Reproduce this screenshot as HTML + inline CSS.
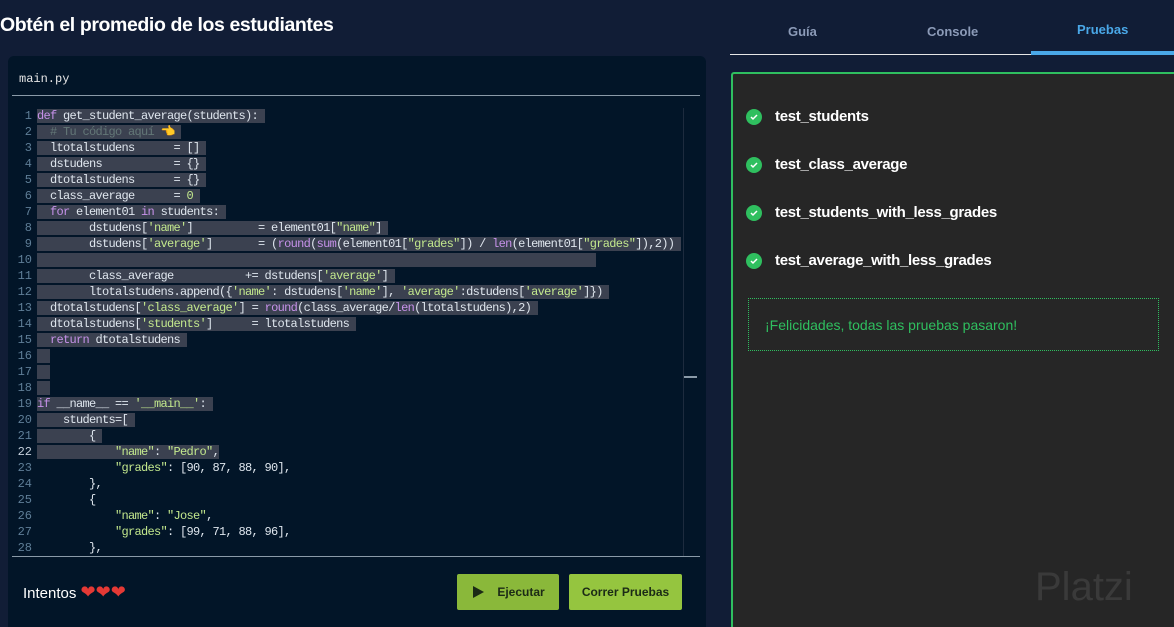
<!DOCTYPE html>
<html><head><meta charset="utf-8"><style>
*{margin:0;padding:0;box-sizing:border-box}
body{width:1174px;height:627px;overflow:hidden;background:#111d36;font-family:"Liberation Sans",sans-serif;position:relative}
.title{position:absolute;left:0;top:14px;color:#fff;font-weight:bold;font-size:19.5px;letter-spacing:-0.4px}
.ed{position:absolute;left:8px;top:56px;width:698px;height:571px;background:#021528;border-radius:6px 6px 0 0}
.fname{position:absolute;left:19px;top:72px;color:#e6e6e6;font:12px "Liberation Mono",monospace}
.hr{position:absolute;left:12px;width:688px;height:1px;background:#8a9aa8}
.code{position:absolute;left:8px;top:108px;width:675px;font:12px/16px "Liberation Mono",monospace;letter-spacing:-0.7px;color:#dfe6ee}
.ln{display:inline-block;width:24px;text-align:right;color:#5f7e97;margin-right:5px;letter-spacing:0}
.l{height:16px;white-space:pre}
.s{background:#3b4150}
.k{color:#c792ea}.g{color:#c3e88d}.c{color:#637777}
.sb{position:absolute;left:683px;top:108px;width:14px;height:448px;border-left:1px solid #1d2b3e}
.foot{position:absolute;left:23px;top:582px;color:#fff;font-size:15px}
.btn{position:absolute;top:574px;height:36px;border-radius:2px;color:#1b2a16;font-weight:bold;font-size:12px;display:flex;align-items:center;justify-content:center}
.tab{position:absolute;top:24px;font-weight:bold;font-size:13px;color:#8c9bb8}
.panel{position:absolute;left:731px;top:72px;width:443px;height:555px;background:#262626;border:2px solid #2fbf5f;border-right:none;border-bottom:none;border-radius:3px 0 0 0}
.t{position:absolute;left:746px;color:#fff;font-weight:bold;font-size:15px;display:flex;align-items:center;letter-spacing:-0.3px}
.ck{width:16px;height:16px;border-radius:50%;background:#2fbf5f;margin-right:13px;display:flex;align-items:center;justify-content:center}
.msg{position:absolute;left:748px;top:298px;width:411px;height:53px;border:1px dotted #2fbf5f;color:#2fbf5f;font-size:14px;padding:18px 0 0 16px}
</style></head><body>
<div class="title">Obtén el promedio de los estudiantes</div>
<div class="ed"></div>
<div class="fname">main.py</div>
<div class="hr" style="top:95px"></div>
<div class="hr" style="top:556px"></div>
<div class="sb"><div style="position:absolute;left:0;top:268px;width:13px;height:2px;background:#8a9aa8"></div></div>
<div class="code">
<div class="l"><span class="ln">1</span><span class="s"><span class="k">def</span> get_student_average(students): </span></div>
<div class="l"><span class="ln">2</span><span class="s">  <span class="c"># Tu código aquí</span> 👈 </span></div>
<div class="l"><span class="ln">3</span><span class="s">  ltotalstudens      = [] </span></div>
<div class="l"><span class="ln">4</span><span class="s">  dstudens           = {} </span></div>
<div class="l"><span class="ln">5</span><span class="s">  dtotalstudens      = {} </span></div>
<div class="l"><span class="ln">6</span><span class="s">  class_average      = <span class="g">0</span> </span></div>
<div class="l"><span class="ln">7</span><span class="s">  <span class="k">for</span> element01 <span class="k">in</span> students: </span></div>
<div class="l"><span class="ln">8</span><span class="s">        dstudens[<span class="g">'name'</span>]          = element01[<span class="g">"name"</span>] </span></div>
<div class="l"><span class="ln">9</span><span class="s">        dstudens[<span class="g">'average'</span>]       = (<span class="k">round</span>(<span class="k">sum</span>(element01[<span class="g">"grades"</span>]) / <span class="k">len</span>(element01[<span class="g">"grades"</span>]),2)) </span></div>
<div class="l"><span class="ln">10</span><span class="s">                                                                                      </span></div>
<div class="l"><span class="ln">11</span><span class="s">        class_average           += dstudens[<span class="g">'average'</span>] </span></div>
<div class="l"><span class="ln">12</span><span class="s">        ltotalstudens.append({<span class="g">'name'</span>: dstudens[<span class="g">'name'</span>], <span class="g">'average'</span>:dstudens[<span class="g">'average'</span>]}) </span></div>
<div class="l"><span class="ln">13</span><span class="s">  dtotalstudens[<span class="g">'class_average'</span>] = <span class="k">round</span>(class_average/<span class="k">len</span>(ltotalstudens),2) </span></div>
<div class="l"><span class="ln">14</span><span class="s">  dtotalstudens[<span class="g">'students'</span>]      = ltotalstudens </span></div>
<div class="l"><span class="ln">15</span><span class="s">  <span class="k">return</span> dtotalstudens </span></div>
<div class="l"><span class="ln">16</span><span class="s">  </span></div>
<div class="l"><span class="ln">17</span><span class="s">  </span></div>
<div class="l"><span class="ln">18</span><span class="s">  </span></div>
<div class="l"><span class="ln">19</span><span class="s"><span class="k">if</span> __name__ == <span class="g">'__main__'</span>: </span></div>
<div class="l"><span class="ln">20</span><span class="s">    students=[ </span></div>
<div class="l"><span class="ln">21</span><span class="s">        { </span></div>
<div class="l"><span class="ln" style="color:#c5d0dc">22</span><span class="s">            <span class="g">"name"</span>: <span class="g">"Pedro"</span>,</span></div>
<div class="l"><span class="ln">23</span>            <span class="g">"grades"</span>: [90, 87, 88, 90],</div>
<div class="l"><span class="ln">24</span>        },</div>
<div class="l"><span class="ln">25</span>        {</div>
<div class="l"><span class="ln">26</span>            <span class="g">"name"</span>: <span class="g">"Jose"</span>,</div>
<div class="l"><span class="ln">27</span>            <span class="g">"grades"</span>: [99, 71, 88, 96],</div>
<div class="l"><span class="ln">28</span>        },</div>
</div>
<div class="foot">Intentos <span style="color:#e53935;font-size:18px">❤❤❤</span></div>
<div class="btn" style="left:457px;width:102px;background:#8ab83a"><svg width="14" height="14" viewBox="0 0 14 14" style="margin-right:12px"><path d="M2 1L13 7L2 13Z" fill="#1b2a16"/></svg>Ejecutar</div>
<div class="btn" style="left:569px;width:113px;background:#95c53f">Correr Pruebas</div>

<div class="tab" style="left:788px">Guía</div>
<div class="tab" style="left:927px">Console</div>
<div class="tab" style="left:1077px;top:22px;color:#4aa8e8">Pruebas</div>
<div style="position:absolute;left:730px;top:54px;width:301px;height:1px;background:#e6e6e6"></div>
<div style="position:absolute;left:1031px;top:51px;width:143px;height:4px;background:#4aa8e8"></div>
<div class="panel"></div>
<div class="t" style="top:108px"><div class="ck"><svg width="10" height="10" viewBox="0 0 10 10"><path d="M2 5L4 7L8 3" stroke="#fff" stroke-width="1.5" fill="none"/></svg></div>test_students</div>
<div class="t" style="top:156px"><div class="ck"><svg width="10" height="10" viewBox="0 0 10 10"><path d="M2 5L4 7L8 3" stroke="#fff" stroke-width="1.5" fill="none"/></svg></div>test_class_average</div>
<div class="t" style="top:204px"><div class="ck"><svg width="10" height="10" viewBox="0 0 10 10"><path d="M2 5L4 7L8 3" stroke="#fff" stroke-width="1.5" fill="none"/></svg></div>test_students_with_less_grades</div>
<div class="t" style="top:252px"><div class="ck"><svg width="10" height="10" viewBox="0 0 10 10"><path d="M2 5L4 7L8 3" stroke="#fff" stroke-width="1.5" fill="none"/></svg></div>test_average_with_less_grades</div>
<div class="msg">¡Felicidades, todas las pruebas pasaron!</div>
<div style="position:absolute;left:1035px;top:565px;color:#3a3a3a;font-size:40px">Platzi</div>
</body></html>
